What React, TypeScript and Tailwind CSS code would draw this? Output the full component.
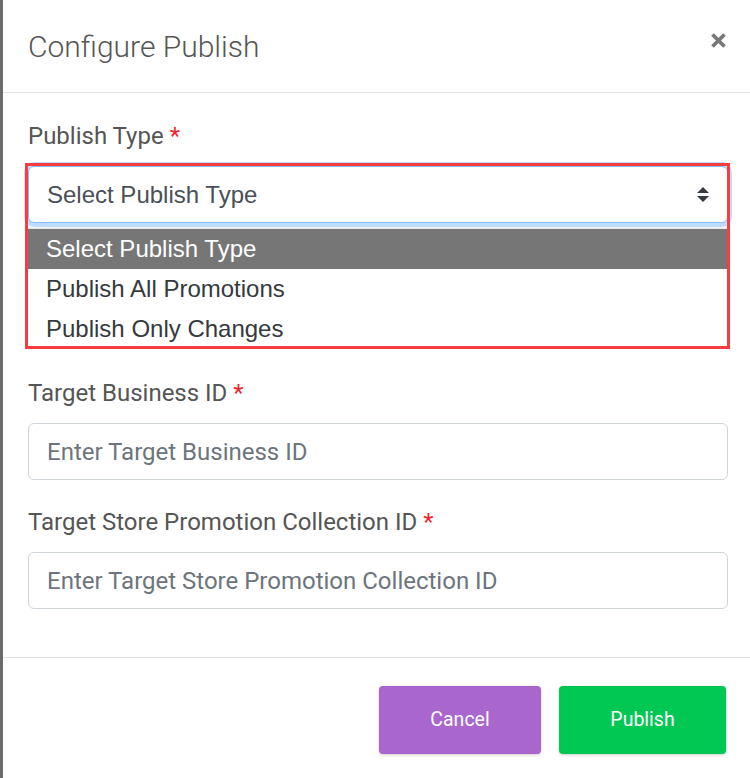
import type { FC } from 'react';

const roboto = "font-['Roboto',_'Liberation_Sans',_sans-serif]";
const arial = "font-['Liberation_Sans',_Arial,_sans-serif]";

const Required: FC = () => <span className="text-[#f5222d] ml-1.5">*</span>;

const Label: FC<{ text: string }> = ({ text }) => (
    <label className={`block text-[24px] leading-[36px] text-[#555] mb-3 ${roboto}`}>
        {text}
        <Required />
    </label>
);

const TextInput: FC<{ placeholder: string }> = ({ placeholder }) => (
    <input
        placeholder={placeholder}
        className={`w-full h-[57px] px-[18px] border border-[#ced4da] rounded-[6px] text-[24px] placeholder:text-[#6c757d] outline-none ${roboto}`}
    />
);

const SortArrows: FC = () => (
    <svg width="12" height="15" viewBox="0 0 4 5" className="text-[#343a40]">
        <path d="M2 0L0 2h4zm0 5L0 3h4z" fill="currentColor" />
    </svg>
);

const options = ['Select Publish Type', 'Publish All Promotions', 'Publish Only Changes'];

const PublishTypeSelect: FC = () => (
    <div className="relative mb-[152px]">
        <div className="h-[57px] flex items-center justify-between pl-[18px] pr-[18px] border border-[#80bdff] rounded-[6px] ring-4 ring-[#007bff]/25 bg-white">
            <span className={`text-[24px] text-[#495057] ${arial}`}>Select Publish Type</span>
            <SortArrows />
        </div>
        {/* native dropdown popup */}
        <ul className="absolute left-0 right-0 top-[63px] bg-white shadow-[0_-1px_2px_rgba(0,0,0,0.15)]">
            {options.map((o, i) => (
                <li
                    key={o}
                    className={`h-10 flex items-center pl-[18px] text-[24px] ${arial} ${i === 0 ? 'bg-[#767676] text-white' : 'text-[#353a3f]'}`}
                >
                    {o}
                </li>
            ))}
        </ul>
        {/* red annotation box */}
        <div className="absolute -left-[3px] -top-[3px] w-[705px] h-[186px] border-[3px] border-[#f73c42] pointer-events-none" />
    </div>
);

const CloseIcon: FC = () => (
    <svg width="15" height="15" viewBox="0 0 15 15" className="text-[#787878] -mt-[11px]">
        <path d="M1.5 1.5L13.5 13.5M13.5 1.5L1.5 13.5" stroke="currentColor" strokeWidth="3.8" />
    </svg>
);

export default function App() {
    return (
        <div className="flex w-[750px] h-[778px] overflow-hidden bg-white">
            <div className="w-[3px] shrink-0 bg-[#6b6b6b]" />
            <div className="flex-1 flex flex-col">
                <header className="h-[93px] shrink-0 flex items-center justify-between pl-[25px] pr-[24px] border-b border-[#e3e3e3]">
                    <h1 className={`text-[30px] font-light text-[#555] ${roboto}`}>Configure Publish</h1>
                    <CloseIcon />
                </header>
                <main className="pt-[25px] pb-6 pl-[25px] pr-[22px] border-b border-[#e3e3e3]">
                    <Label text="Publish Type" />
                    <PublishTypeSelect />
                    <Label text="Target Business ID" />
                    <div className="mb-6">
                        <TextInput placeholder="Enter Target Business ID" />
                    </div>
                    <Label text="Target Store Promotion Collection ID" />
                    <div className="mb-6">
                        <TextInput placeholder="Enter Target Store Promotion Collection ID" />
                    </div>
                </main>
                <footer className="flex justify-end gap-[18px] pt-[28px] pr-[24px]">
                    <button className={`h-[68px] w-[162px] rounded-[4px] bg-[#a966cc] text-white text-[19.5px] shadow-[0_1px_3px_rgba(0,0,0,0.2)] ${roboto}`}>Cancel</button>
                    <button className={`h-[68px] w-[167px] rounded-[4px] bg-[#00c853] text-white text-[19.5px] shadow-[0_1px_3px_rgba(0,0,0,0.2)] ${roboto}`}>Publish</button>
                </footer>
            </div>
        </div>
    );
}
